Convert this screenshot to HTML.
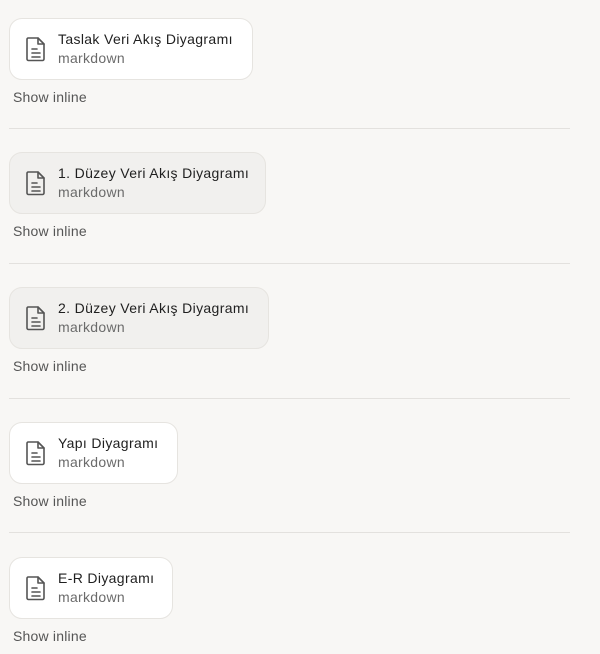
<!DOCTYPE html>
<html><head><meta charset="utf-8"><style>
body{margin:0;background:#f8f7f5;font-family:"Liberation Sans",sans-serif;width:600px;height:654px;overflow:hidden;position:relative}
.item{position:absolute;left:9px;width:570px}
.card{position:absolute;left:0;top:0;height:62px;border:1px solid #e6e4e0;border-radius:13px;background:#fff;box-sizing:border-box}
.card.g{background:#f1f0ee}
.ic{position:absolute;left:15px;top:17px}
.t{position:absolute;left:48px;top:12px;font-size:14px;letter-spacing:0.35px;color:#1f1f1f;white-space:nowrap}
.s{position:absolute;left:48px;top:31px;font-size:14px;letter-spacing:0.3px;color:#6b6b6b;white-space:nowrap}
.si{position:absolute;left:4px;top:71px;font-size:14px;letter-spacing:0.2px;color:#555;white-space:nowrap}
.hr{position:absolute;left:9px;width:561px;height:1px;background:#e3e1de}
</style></head><body>
<div class="item" style="top:18px"><div class="card" style="width:244px"><svg class="ic" width="22" height="26" viewBox="0 0 22 26" fill="none" stroke="#555" stroke-width="1.6" stroke-linejoin="round" stroke-linecap="round"><path d="M3 2h10l6 6v15a1.5 1.5 0 0 1-1.5 1.5h-14A1.5 1.5 0 0 1 2 23V3.5A1.5 1.5 0 0 1 3 2z"/><path d="M13 2v6h6"/><path d="M7 13h5M7 17h8M7 21h8"/></svg><div class="t">Taslak Veri Akış Diyagramı</div><div class="s">markdown</div></div><div class="si">Show inline</div></div>
<div class="hr" style="top:128px"></div>
<div class="item" style="top:152px"><div class="card g" style="width:257px"><svg class="ic" width="22" height="26" viewBox="0 0 22 26" fill="none" stroke="#555" stroke-width="1.6" stroke-linejoin="round" stroke-linecap="round"><path d="M3 2h10l6 6v15a1.5 1.5 0 0 1-1.5 1.5h-14A1.5 1.5 0 0 1 2 23V3.5A1.5 1.5 0 0 1 3 2z"/><path d="M13 2v6h6"/><path d="M7 13h5M7 17h8M7 21h8"/></svg><div class="t">1. Düzey Veri Akış Diyagramı</div><div class="s">markdown</div></div><div class="si">Show inline</div></div>
<div class="hr" style="top:263px"></div>
<div class="item" style="top:287px"><div class="card g" style="width:260px"><svg class="ic" width="22" height="26" viewBox="0 0 22 26" fill="none" stroke="#555" stroke-width="1.6" stroke-linejoin="round" stroke-linecap="round"><path d="M3 2h10l6 6v15a1.5 1.5 0 0 1-1.5 1.5h-14A1.5 1.5 0 0 1 2 23V3.5A1.5 1.5 0 0 1 3 2z"/><path d="M13 2v6h6"/><path d="M7 13h5M7 17h8M7 21h8"/></svg><div class="t">2. Düzey Veri Akış Diyagramı</div><div class="s">markdown</div></div><div class="si">Show inline</div></div>
<div class="hr" style="top:398px"></div>
<div class="item" style="top:422px"><div class="card" style="width:169px"><svg class="ic" width="22" height="26" viewBox="0 0 22 26" fill="none" stroke="#555" stroke-width="1.6" stroke-linejoin="round" stroke-linecap="round"><path d="M3 2h10l6 6v15a1.5 1.5 0 0 1-1.5 1.5h-14A1.5 1.5 0 0 1 2 23V3.5A1.5 1.5 0 0 1 3 2z"/><path d="M13 2v6h6"/><path d="M7 13h5M7 17h8M7 21h8"/></svg><div class="t">Yapı Diyagramı</div><div class="s">markdown</div></div><div class="si">Show inline</div></div>
<div class="hr" style="top:532px"></div>
<div class="item" style="top:557px"><div class="card" style="width:164px"><svg class="ic" width="22" height="26" viewBox="0 0 22 26" fill="none" stroke="#555" stroke-width="1.6" stroke-linejoin="round" stroke-linecap="round"><path d="M3 2h10l6 6v15a1.5 1.5 0 0 1-1.5 1.5h-14A1.5 1.5 0 0 1 2 23V3.5A1.5 1.5 0 0 1 3 2z"/><path d="M13 2v6h6"/><path d="M7 13h5M7 17h8M7 21h8"/></svg><div class="t">E-R Diyagramı</div><div class="s">markdown</div></div><div class="si">Show inline</div></div>
</body></html>
